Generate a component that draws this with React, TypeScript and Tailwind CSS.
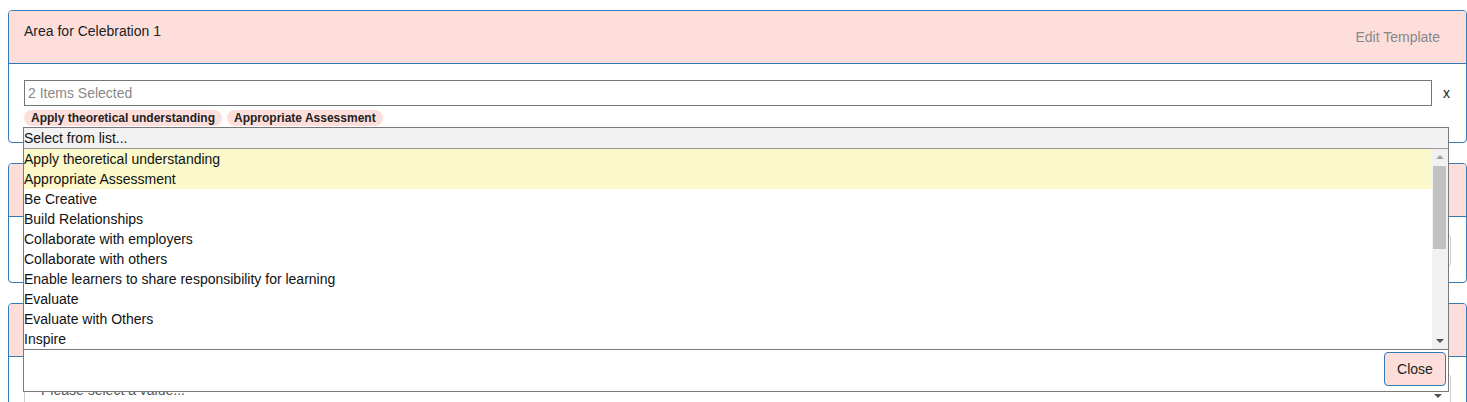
import React from "react";

const items = [
  "Apply theoretical understanding",
  "Appropriate Assessment",
  "Be Creative",
  "Build Relationships",
  "Collaborate with employers",
  "Collaborate with others",
  "Enable learners to share responsibility for learning",
  "Evaluate",
  "Evaluate with Others",
  "Inspire",
  "Lead",
  "Manage",
];
const selected = [0, 1];

function Card({ title, children, edit }: { title?: string; children: React.ReactNode; edit?: boolean }) {
  return (
    <div className="border border-[#337ab7] rounded-[4px] bg-white overflow-hidden">
      <div className="h-[53px] bg-[#fddedb] border-b border-[#337ab7] flex justify-between pl-[15px] pr-[26px]">
        <div className="pt-[10px] text-[14px] leading-[20px] text-[#222]">{title}</div>
        {edit && <div className="pt-[16px] text-[14px] leading-[20px] text-[#888]">Edit Template</div>}
      </div>
      {children}
    </div>
  );
}

export default function App() {
  return (
    <div className="relative w-[1467px] h-[402px] overflow-hidden bg-white" style={{ fontFamily: '"Liberation Sans", Arial, sans-serif' }}>
      <div className="pt-[10px] pl-[8px] w-[1467px] flex flex-col gap-[20px]">
        <Card title="Area for Celebration 1" edit>
          <div className="pt-[16px] pb-[16px] pl-[15px] pr-[8px]">
            <div className="flex items-center">
              <div className="shrink-0 w-[1408px] h-[26px] border border-[#767676] flex items-center pl-[3px] text-[14px] text-[#888]">2 Items Selected</div>
              <div className="ml-[11px] text-[14px] leading-[20px] text-[#222]">x</div>
            </div>
            <div className="flex gap-[5px] mt-[4px]">
              <span className="h-[16px] px-[7px] rounded-full bg-[#fddedb] text-[12px] leading-[16px] font-bold text-[#222]">Apply theoretical understanding</span>
              <span className="h-[16px] px-[7px] rounded-full bg-[#fddedb] text-[12px] leading-[16px] font-bold text-[#222]">Appropriate Assessment</span>
            </div>
          </div>
        </Card>
        <Card>
          <div className="pt-[17px] pb-[15px] pl-[15px] pr-[15px]">
            <div className="w-[1427px] h-[33px] border border-[#ccc] rounded-[4px]"></div>
          </div>
        </Card>
        <Card>
          <div className="pt-[17px] pb-[15px] pl-[15px] pr-[15px]">
            <div className="relative w-[1427px] h-[33px] border border-[#ccc] rounded-[4px] flex items-center pl-[16px] text-[14px] text-[#555]">
              Please select a value...
              <span className="absolute right-[8px] top-[19px] w-0 h-0 border-l-[4px] border-r-[4px] border-t-[4px] border-l-transparent border-r-transparent border-t-[#555]"></span>
            </div>
          </div>
        </Card>
      </div>

      {/* dropdown overlay */}
      <div className="absolute left-[23px] top-[127px] w-[1426px] h-[265px] border border-[#7a7a7a] bg-white flex flex-col text-[14px] leading-[20px] text-[#111]">
        <div className="h-[21px] bg-[#f2f2f2] border-b border-[#9a9a9a] leading-[20px]">Select from list...</div>
        <div className="h-[200px] flex overflow-hidden">
          <div className="flex-1 overflow-hidden">
            {items.map((it, i) => (
              <div key={it} className={(selected.includes(i) ? "bg-[#fbf9c9] " : "") + "h-[20px] whitespace-nowrap"}>{it}</div>
            ))}
          </div>
          <div className="w-[16px] bg-[#f1f1f1] relative">
            <span className="absolute left-[4px] top-[6px] w-0 h-0 border-l-[4px] border-r-[4px] border-b-[4px] border-l-transparent border-r-transparent border-b-[#a3a3a3]"></span>
            <div className="absolute left-[1px] top-[17px] w-[13px] h-[83px] bg-[#c1c1c1]"></div>
            <span className="absolute left-[4px] bottom-[6px] w-0 h-0 border-l-[4px] border-r-[4px] border-t-[4px] border-l-transparent border-r-transparent border-t-[#505050]"></span>
          </div>
        </div>
        <div className="flex-1 border-t border-[#7a7a7a] flex justify-end items-start pt-[2px] pr-[2px]">
          <button className="w-[62px] h-[34px] bg-[#fddedb] border border-[#337ab7] rounded-[4px] text-[14px] text-[#222]">Close</button>
        </div>
      </div>
    </div>
  );
}
